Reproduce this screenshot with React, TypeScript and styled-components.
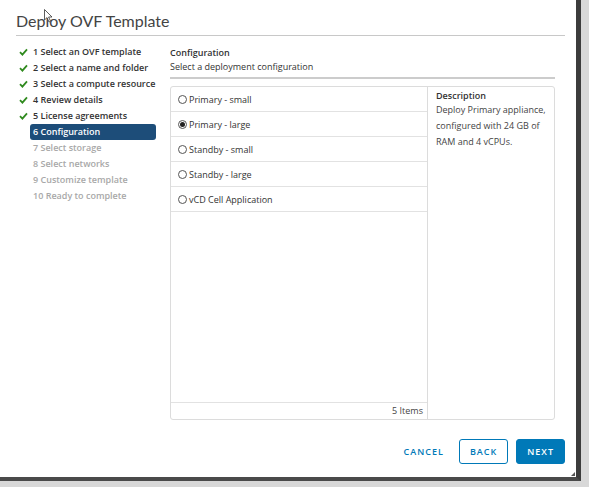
import React from 'react';
import styled, { createGlobalStyle } from 'styled-components';

const GlobalStyle = createGlobalStyle`
    body {
        margin: 0;
        background: #d8d8d8;
        font-family: 'Open Sans', 'Liberation Sans', sans-serif;
    }
`
const Dialog = styled.div`
    position: relative;
    width: 581px;
    height: 481px;
    box-sizing: border-box;
    background: #FFFFFF;
    border-right: 5px solid #3c3c3c;
    border-bottom: 4px solid #4a4a4a;
    display: flex;
    flex-direction: column;
    padding: 0 11px 0 16px;
`
const Title = styled.h1`
    margin: 0;
    padding: 11px 0 4px 0;
    font-family: 'Lato', 'Open Sans', sans-serif;
    font-weight: 400;
    font-size: 16px;
    line-height: 20px;
    color: #444444;
    border-bottom: 1px solid #c8c8c8;
`
const Body = styled.div`
    display: flex;
    padding-top: 8px;
`
const Steps = styled.ul`
    list-style: none;
    margin: 0;
    padding: 0;
    width: 144px;
`
const Step = styled.li<{ $state: 'done' | 'active' | 'todo' }>`
    display: flex;
    align-items: center;
    height: 16px;
    font-size: 9px;
    font-weight: 600;
    color: ${p => p.$state === 'todo' ? '#a8a8a8' : '#333333'};
`
const Check = styled.span`
    width: 14px;
    display: flex;
    justify-content: center;
    svg { display: block; }
`
const StepLabel = styled.span<{ $active?: boolean }>`
    flex: 1;
    height: 16px;
    line-height: 16px;
    padding-left: 3px;
    margin-right: 4px;
    border-radius: 3px;
    background: ${p => p.$active ? '#1d4d79' : 'transparent'};
    color: ${p => p.$active ? '#FFFFFF' : 'inherit'};
`
const Content = styled.div`
    flex: 1;
    display: flex;
    flex-direction: column;
    padding: 2px 10px 0 10px;
`
const SectionTitle = styled.div`
    font-size: 9px;
    font-weight: 600;
    color: #333333;
    line-height: 14px;
`
const SectionText = styled.div`
    font-size: 9px;
    color: #333333;
    line-height: 14px;
    padding-bottom: 3px;
    border-bottom: 2px solid #cccccc;
`
const Grid = styled.div`
    margin-top: 7px;
    height: 334px;
    display: flex;
    border: 1px solid #dcdcdc;
    border-radius: 3px;
    box-sizing: border-box;
`
const ListCol = styled.div`
    width: 256px;
    display: flex;
    flex-direction: column;
    border-right: 1px solid #dcdcdc;
`
const Rows = styled.div`
    flex: 1;
`
const Row = styled.label`
    display: flex;
    align-items: center;
    gap: 2px;
    height: 24px;
    padding-left: 7px;
    border-bottom: 1px solid #e2e2e2;
    font-size: 9px;
    color: #333333;
`
const Radio = styled.span<{ $checked?: boolean }>`
    width: 9px;
    height: 9px;
    border-radius: 50%;
    border: 1px solid #555555;
    box-sizing: border-box;
    display: flex;
    align-items: center;
    justify-content: center;
    &::after {
        content: '';
        width: 5px;
        height: 5px;
        border-radius: 50%;
        background: ${p => p.$checked ? '#222222' : 'transparent'};
    }
`
const ListFooter = styled.div`
    height: 16px;
    border-top: 1px solid #e2e2e2;
    font-size: 9px;
    color: #444444;
    text-align: right;
    line-height: 16px;
    padding-right: 4px;
`
const DescCol = styled.div`
    flex: 1;
    padding: 2px 8px;
    white-space: nowrap;
`
const DescTitle = styled.div`
    font-size: 9px;
    font-weight: 600;
    color: #333333;
    line-height: 13px;
`
const DescText = styled.div`
    font-size: 9px;
    color: #444444;
    line-height: 16px;
`
const Footer = styled.div`
    display: flex;
    justify-content: flex-end;
    align-items: center;
    gap: 8px;
    padding-top: 19px;
`
const Button = styled.button<{ $variant: 'link' | 'outline' | 'solid' }>`
    height: 25px;
    min-width: 48px;
    padding: 0 ${p => p.$variant === 'link' ? '6px' : '10px'};
    font-family: 'Open Sans', sans-serif;
    font-size: 9px;
    font-weight: 600;
    letter-spacing: 1px;
    border-radius: 3px;
    border: 1px solid ${p => p.$variant === 'link' ? 'transparent' : '#0079b8'};
    background: ${p => p.$variant === 'solid' ? '#0079b8' : '#FFFFFF'};
    color: ${p => p.$variant === 'solid' ? '#FFFFFF' : '#0079b8'};
`
const Cursor = styled.svg`
    position: absolute;
    left: 44px;
    top: 9px;
`
const Grip = styled.span`
    position: absolute;
    right: 1px;
    bottom: 1px;
    width: 0;
    height: 0;
    border-left: 4px solid transparent;
    border-bottom: 4px solid #555555;
`

const steps = [
    { label: '1 Select an OVF template', state: 'done' },
    { label: '2 Select a name and folder', state: 'done' },
    { label: '3 Select a compute resource', state: 'done' },
    { label: '4 Review details', state: 'done' },
    { label: '5 License agreements', state: 'done' },
    { label: '6 Configuration', state: 'active' },
    { label: '7 Select storage', state: 'todo' },
    { label: '8 Select networks', state: 'todo' },
    { label: '9 Customize template', state: 'todo' },
    { label: '10 Ready to complete', state: 'todo' },
] as const;

const configs = ['Primary - small', 'Primary - large', 'Standby - small', 'Standby - large', 'vCD Cell Application'];

const CheckIcon = () => (
    <svg width="9" height="8" viewBox="0 0 9 8">
        <path d="M1 4.2 L3.4 6.6 L8 1.4" fill="none" stroke="#2f8a1e" strokeWidth="1.8" />
    </svg>
);

const App = () => {
    return (
        <>
            <GlobalStyle />
            <Dialog>
                <Title>Deploy OVF Template</Title>
                <Body>
                    <Steps>
                        {steps.map(s => (
                            <Step key={s.label} $state={s.state}>
                                <Check>{s.state === 'done' && <CheckIcon />}</Check>
                                <StepLabel $active={s.state === 'active'}>{s.label}</StepLabel>
                            </Step>
                        ))}
                    </Steps>
                    <Content>
                        <SectionTitle>Configuration</SectionTitle>
                        <SectionText>Select a deployment configuration</SectionText>
                        <Grid>
                            <ListCol>
                                <Rows>
                                    {configs.map((c, i) => (
                                        <Row key={c}>
                                            <Radio $checked={i === 1} />
                                            {c}
                                        </Row>
                                    ))}
                                </Rows>
                                <ListFooter>5 Items</ListFooter>
                            </ListCol>
                            <DescCol>
                                <DescTitle>Description</DescTitle>
                                <DescText>
                                    Deploy Primary appliance,<br />
                                    configured with 24 GB of<br />
                                    RAM and 4 vCPUs.
                                </DescText>
                            </DescCol>
                        </Grid>
                    </Content>
                </Body>
                <Footer>
                    <Button $variant="link">CANCEL</Button>
                    <Button $variant="outline">BACK</Button>
                    <Button $variant="solid">NEXT</Button>
                </Footer>
                <Cursor width="9" height="14" viewBox="0 0 9 14">
                    <path d="M0.5 0.5 L0.5 11 L3 8.6 L5 13 L6.6 12.3 L4.6 8 L8 8 Z" fill="#ffffff" stroke="#333333" strokeWidth="0.8" />
                </Cursor>
                <Grip />
            </Dialog>
        </>
    );
}
export default App;
